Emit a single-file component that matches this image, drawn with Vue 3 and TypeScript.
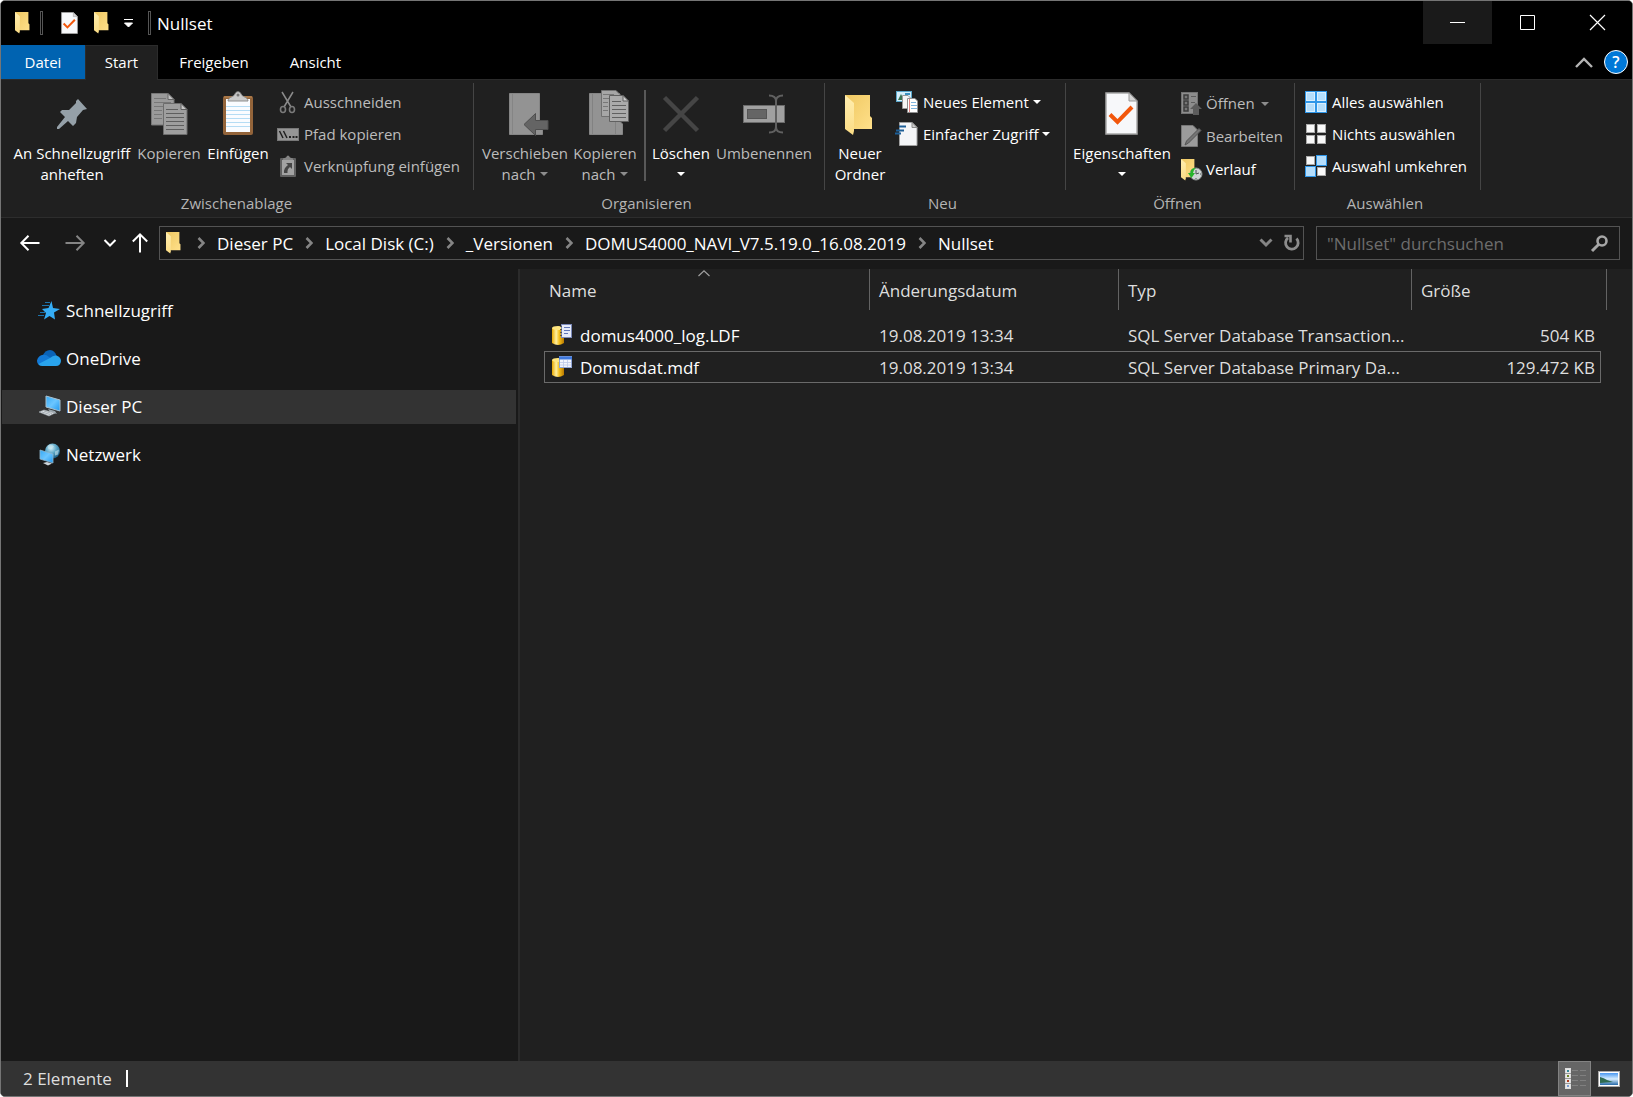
<script setup lang="ts">
import { ref } from 'vue'

interface FileRow {
  name: string
  date: string
  type: string
  size: string
  kind: 'log' | 'data'
}

const crumbs: string[] = ['Dieser PC', 'Local Disk (C:)', '_Versionen', 'DOMUS4000_NAVI_V7.5.19.0_16.08.2019', 'Nullset']

const files: FileRow[] = [
  { name: 'domus4000_log.LDF', date: '19.08.2019 13:34', type: 'SQL Server Database Transaction...', size: '504 KB', kind: 'log' },
  { name: 'Domusdat.mdf', date: '19.08.2019 13:34', type: 'SQL Server Database Primary Da...', size: '129.472 KB', kind: 'data' },
]

const focused = ref('Domusdat.mdf')
const query = ref('')
</script>

<template>
  <div class="window">
    <svg class="defs" aria-hidden="true">
      <defs>
        <linearGradient id="gFolder" x1="0" y1="0" x2="1" y2="1">
          <stop offset="0" stop-color="#efc862" />
          <stop offset="1" stop-color="#ffe08a" />
        </linearGradient>
        <linearGradient id="gFlap" x1="0" y1="0" x2="0" y2="1">
          <stop offset="0" stop-color="#ffeeb0" />
          <stop offset="1" stop-color="#fbdc84" />
        </linearGradient>
        <linearGradient id="gGold" x1="0" y1="0" x2="1" y2="0">
          <stop offset="0" stop-color="#e8a800" />
          <stop offset="0.35" stop-color="#fff0a0" />
          <stop offset="0.6" stop-color="#f4bf1c" />
          <stop offset="1" stop-color="#b87800" />
        </linearGradient>
        <linearGradient id="gScreen" x1="0" y1="0" x2="1" y2="1">
          <stop offset="0" stop-color="#35a8f4" />
          <stop offset="0.5" stop-color="#6cc6ff" />
          <stop offset="1" stop-color="#1e96ee" />
        </linearGradient>
        <linearGradient id="gSky" x1="0" y1="0" x2="0" y2="1">
          <stop offset="0" stop-color="#4a98f0" />
          <stop offset="0.5" stop-color="#d8efff" />
          <stop offset="1" stop-color="#2468a8" />
        </linearGradient>
        <radialGradient id="gGlobe" cx="0.4" cy="0.3" r="0.7">
          <stop offset="0" stop-color="#d6f0f8" />
          <stop offset="0.5" stop-color="#5fa9c8" />
          <stop offset="1" stop-color="#1d5f86" />
        </radialGradient>
        <symbol id="folder" viewBox="0 0 28 41">
          <path d="M0 0H25V21L27 23V34H7Z" fill="url(#gFolder)" />
          <path d="M0 0L9 8V36L8 40L0 34Z" fill="url(#gFlap)" />
        </symbol>
        <symbol id="docCheck" viewBox="0 0 33 43">
          <path d="M1 1H24L32 9V42H1Z" fill="#f7f8fa" stroke="#a8a8a8" stroke-width="1.5" />
          <path d="M24 1V9H32Z" fill="#d4d4d4" stroke="#999" />
          <path d="M5 22.500L12.500 30L27 15" fill="none" stroke="#f2570c" stroke-width="4" />
        </symbol>
        <symbol id="crumbArrow" viewBox="0 0 8 12">
          <path d="M1.500 1L6.500 6L1.500 11" fill="none" stroke="#858585" stroke-width="2.600" />
        </symbol>
      </defs>
    </svg>

    <header class="titlebar">
      <div class="quick">
        <svg class="mini" viewBox="0 0 28 41"><use href="#folder" /></svg>
        <i class="bar bar-a"></i>
        <button class="plain q-doc" aria-label="Eigenschaften"><svg width="17" height="22"><use href="#docCheck" /></svg></button>
        <button class="plain q-folder" aria-label="Neuer Ordner"><svg class="mini" viewBox="0 0 28 41"><use href="#folder" /></svg></button>
        <button class="plain q-more" aria-label="Symbolleiste anpassen">
          <svg width="9" height="8" viewBox="0 0 9 8"><path d="M0 .5H9M.5 4H8.500L4.500 8Z" fill="#fff" stroke="#fff" stroke-width="1" /></svg>
        </button>
        <i class="bar bar-b"></i>
        <h1>Nullset</h1>
      </div>
      <div class="captions">
        <button class="plain cap cap-min" aria-label="Minimieren"><svg width="15" height="15"><path d="M0 7.500H15" stroke="#fff" /></svg></button>
        <button class="plain cap" aria-label="Maximieren"><svg width="15" height="15"><path d="M.5 .5H14.500V14.500H.5Z" fill="none" stroke="#fff" /></svg></button>
        <button class="plain cap" aria-label="Schließen"><svg width="15" height="15"><path d="M0 0L15 15M15 0L0 15" stroke="#fff" stroke-width="1.200" /></svg></button>
      </div>
    </header>

    <nav class="tabs">
      <button class="plain tab tab-file">Datei</button>
      <button class="plain tab tab-on">Start</button>
      <button class="plain tab tab-share">Freigeben</button>
      <button class="plain tab tab-view">Ansicht</button>
      <div class="tabs-end">
        <button class="plain" aria-label="Menüband minimieren"><svg width="18" height="11"><path d="M1 10L9 2L17 10" fill="none" stroke="#b4b4b4" stroke-width="2.400" /></svg></button>
        <button class="plain help" aria-label="Hilfe">?</button>
      </div>
    </nav>

    <section class="ribbon">
      <div class="group g-clip">
        <div class="tools">
          <button class="plain big w-pin">
            <svg viewBox="50 91 44 44"><path d="M78 99L87 109L83 110L77 117L76 123L73 126L68 121L59 129H57V127L65 117L60 112L62 110L69 110L76 103L76 101Z" fill="#95a0a8" /></svg>
            <span>An Schnellzugriff<br />anheften</span>
          </button>
          <button class="plain big w-copy dim">
            <svg viewBox="147 91 44 44">
              <path d="M151.500 93.500H168L174 99.500V125H151.500Z" fill="#9a9a9a" stroke="#777" />
              <path d="M168 93.500V99.500H174Z" fill="#c2c2c2" stroke="#666" />
              <path d="M154 98.500H166M154 102.500H171M154 106.500H171M154 110.500H162M154 114.500H162M154 118.500H162" stroke="#777" />
              <path d="M163.500 103.500H181L187 109.500V134.500H163.500Z" fill="#9e9e9e" stroke="#6d6d6d" />
              <path d="M181 103.500V109.500H187Z" fill="#c6c6c6" stroke="#5e5e5e" />
              <path d="M166 109.500H178M166 113.500H184M166 117.500H184M166 121.500H184M166 125.500H184M166 129.500H184" stroke="#5e5e5e" />
            </svg>
            <span>Kopieren</span>
          </button>
          <button class="plain big w-paste">
            <svg viewBox="216 91 44 44">
              <rect x="223" y="96" width="30" height="39" rx="2" fill="#93643a" />
              <path d="M224 97H252" stroke="#c08b55" />
              <rect x="226" y="99" width="24" height="33" fill="#fafcff" />
              <path d="M226 106.500H250M226 110.500H250M226 114.500H250M226 118.500H250M226 122.500H250M226 126.500H250" stroke="#b5dcf4" />
              <path d="M228 101C228 97 234 97 235 94C236 91 240 91 241 94C242 97 248 97 248 101Z" fill="#c9c9c9" stroke="#8e8e8e" />
              <circle cx="238" cy="95" r="1.500" fill="#777" />
            </svg>
            <span>Einfügen</span>
          </button>
          <div class="stack">
            <button class="plain small dim">
              <svg viewBox="277 91 24 24"><path d="M282 92L291 107M293 92L284 107" stroke="#8b8b8b" stroke-width="1.500" /><g fill="none" stroke="#7a7a7a" stroke-width="1.600"><ellipse cx="283" cy="109.500" rx="2.500" ry="3" /><ellipse cx="292" cy="109.500" rx="2.500" ry="3" /></g></svg>
              Ausschneiden
            </button>
            <button class="plain small dim">
              <svg viewBox="277 123 24 24"><rect x="277.500" y="128.500" width="21" height="12" fill="#959595" stroke="#787878" /><path d="M279.500 131L283 138M283.500 131L287 138" stroke="#222" stroke-width="1.500" /><path d="M289 137H291M292.500 137H294.500M295.500 137H297.500" stroke="#222" stroke-width="2" /></svg>
              Pfad kopieren
            </button>
            <button class="plain small dim">
              <svg viewBox="277 155 24 24"><rect x="280" y="158" width="16" height="19" rx="1" fill="#606060" /><rect x="282" y="160" width="12" height="15" fill="#a2a2a2" /><path d="M283 160V158.500L286 157.500Q288 153.500 290 157.500L293 158.500V160Z" fill="#858585" /><path d="M286 163H292V169L290 167Q287 169 287.500 173H284Q283.500 168 288 165Z" fill="#454545" /></svg>
              Verknüpfung einfügen
            </button>
          </div>
        </div>
        <h2>Zwischenablage</h2>
      </div>

      <div class="group g-org">
        <div class="tools">
          <button class="plain big w-move dim">
            <svg viewBox="502 91 44 44">
              <path d="M508.500 93.500H538.500V121L541.500 124V134.500H508.500Z" fill="#939393" stroke="#858585" />
              <path d="M511.500 94V134" stroke="#858585" />
              <path d="M523 124.500L534.500 113.500V120.500H547V129.500H534.500V135.500Z" fill="#646464" stroke="#4e4e4e" />
            </svg>
            <span>Verschieben<br />nach <i class="caret"></i></span>
          </button>
          <button class="plain big w-copyto dim">
            <svg viewBox="582 91 44 44">
              <path d="M588.500 93.500H618.500V121L621.500 124V134.500H588.500Z" fill="#939393" stroke="#858585" />
              <path d="M591.500 94V134M614.500 122V134" stroke="#828282" />
              <path d="M600.500 90.500H615L619 94.500V116.500H600.500Z" fill="#a6a6a6" stroke="#707070" />
              <path d="M602 94.500H613M602 98.500H614M602 102.500H607M602 106.500H607M602 110.500H607" stroke="#777" />
              <path d="M608.500 95.500H622L627.500 101V121.500H608.500Z" fill="#ababab" stroke="#606060" />
              <path d="M622 95.500V101H627.500Z" fill="#ccc" stroke="#606060" />
              <path d="M611 101.500H620M611 105.500H625M611 109.500H625M611 113.500H625M611 117.500H625" stroke="#606060" />
            </svg>
            <span>Kopieren<br />nach <i class="caret"></i></span>
          </button>
          <i class="split"></i>
          <button class="plain big w-del">
            <svg viewBox="660 91 44 44"><path d="M665.500 97.500L698.500 130.500M698.500 97.500L665.500 130.500" stroke="#454545" stroke-width="4.500" /></svg>
            <span>Löschen<br /><i class="caret"></i></span>
          </button>
          <button class="plain big w-ren dim">
            <svg viewBox="742 91 44 44">
              <rect x="743.500" y="105.500" width="41" height="17" fill="#a0a0a0" stroke="#6b6b6b" />
              <rect x="747.500" y="109.500" width="19" height="9" fill="#656565" stroke="#555" />
              <path d="M769 95.500Q776 95.500 776 101V127Q776 132.500 769 132.500M783 95.500Q776 95.500 776 101V127Q776 132.500 783 132.500" fill="none" stroke="#606060" stroke-width="2" />
            </svg>
            <span>Umbenennen</span>
          </button>
        </div>
        <h2>Organisieren</h2>
      </div>

      <div class="group g-new">
        <div class="tools">
          <button class="plain big w-new">
            <svg viewBox="838 91 44 44"><use href="#folder" x="845" y="95" width="28" height="41" /></svg>
            <span>Neuer<br />Ordner</span>
          </button>
          <div class="stack">
            <button class="plain small">
              <svg viewBox="897 91 24 24">
                <rect x="897.500" y="91.500" width="15" height="10" fill="#d5effb" stroke="#5ba8cc" />
                <path d="M899 100L902 94L905 100Z" fill="#397353" /><path d="M906 94H911" stroke="#3b91c0" stroke-width="2" />
                <path d="M903.500 95.500H909L911.500 98V108.500H903.500Z" fill="#f5f5f5" stroke="#999" />
                <path d="M908.500 98.500H916L918.500 101V112.500H908.500Z" fill="#fff" stroke="#909090" />
                <path d="M910.500 99V112" stroke="#e08484" /><path d="M912 102.500H917M912 105.500H918M912 108.500H918" stroke="#7eb5df" />
              </svg>
              Neues Element <i class="caret"></i>
            </button>
            <button class="plain small">
              <svg viewBox="897 123 24 24">
                <path d="M900.500 122.500H913L918 127.500V145.500H900.500Z" fill="#f4f5f7" stroke="#a0a0a0" />
                <path d="M913 122.500V127.500H918Z" fill="#ccc" stroke="#8b8b8b" />
                <path d="M900 126.500H907M897 130.500H905M896 133.500H902" stroke="#1c5f97" stroke-width="2" />
              </svg>
              Einfacher Zugriff <i class="caret"></i>
            </button>
          </div>
        </div>
        <h2>Neu</h2>
      </div>

      <div class="group g-open">
        <div class="tools">
          <button class="plain big w-prop">
            <svg viewBox="1100 91 44 44"><use href="#docCheck" x="1105" y="92" width="33" height="43" /></svg>
            <span>Eigenschaften<br /><i class="caret"></i></span>
          </button>
          <div class="stack tall">
            <button class="plain small dim">
              <svg viewBox="1179 92 24 24">
                <rect x="1181.500" y="92.500" width="16" height="21" fill="#8d8d8d" stroke="#727272" />
                <g fill="#777" stroke="#3c3c3c" stroke-width="1.500"><rect x="1184" y="95" width="4" height="4" /><rect x="1184" y="101" width="4" height="4" /><rect x="1184" y="107" width="4" height="4" /></g>
                <path d="M1191 96.500H1196M1191 102.500H1195" stroke="#5d5d5d" />
                <path d="M1196 103L1202 109H1199V115H1193V109H1190Z" fill="#5c5c5c" />
              </svg>
              Öffnen <i class="caret far"></i>
            </button>
            <button class="plain small dim">
              <svg viewBox="1179 125 24 24">
                <path d="M1181.500 125.500H1193L1197.500 130V146.500H1181.500Z" fill="#9b9b9b" stroke="#777" />
                <path d="M1185 145L1186.500 141L1199 128.500L1201 130.500L1188.500 143Z" fill="#747474" stroke="#555" />
              </svg>
              Bearbeiten
            </button>
            <button class="plain small">
              <svg viewBox="1179 158 24 24">
                <use href="#folder" x="1181" y="159" width="15" height="22" />
                <circle cx="1196" cy="174" r="6" fill="#cfd4d4" stroke="#8c9292" />
                <path d="M1196 170V174L1199 173M1196 179V178M1192 174H1191M1201 174H1200" fill="none" stroke="#4d5555" />
                <path d="M1196 168Q1190 168 1190.500 173L1188 173L1191.500 178L1195 173H1193Q1193 170 1196 168Z" fill="#27b52b" />
              </svg>
              Verlauf
            </button>
          </div>
        </div>
        <h2>Öffnen</h2>
      </div>

      <div class="group g-sel">
        <div class="tools">
          <div class="stack">
            <button class="plain small">
              <svg viewBox="0 0 24 24"><rect width="22" height="22" fill="#2f96e8" /><g fill="#b5defc" stroke="#d9effe"><rect x="1.500" y="1.500" width="8" height="8" /><rect x="12.500" y="1.500" width="8" height="8" /><rect x="1.500" y="12.500" width="8" height="8" /><rect x="12.500" y="12.500" width="8" height="8" /></g></svg>
              Alles auswählen
            </button>
            <button class="plain small">
              <svg viewBox="0 0 24 24"><g fill="#f8f8f8" stroke="#a9a9a9"><rect x="1.500" y="1.500" width="8" height="8" /><rect x="12.500" y="1.500" width="8" height="8" /><rect x="1.500" y="12.500" width="8" height="8" /><rect x="12.500" y="12.500" width="8" height="8" /></g></svg>
              Nichts auswählen
            </button>
            <button class="plain small">
              <svg viewBox="0 0 24 24"><g fill="#f8f8f8" stroke="#a9a9a9"><rect x="1.500" y="1.500" width="8" height="8" /><rect x="12.500" y="12.500" width="8" height="8" /></g><g fill="#b5defc" stroke="#2f96e8"><rect x="11.500" y=".5" width="10" height="10" /><rect x=".5" y="11.500" width="10" height="10" /></g></svg>
              Auswahl umkehren
            </button>
          </div>
        </div>
        <h2>Auswählen</h2>
      </div>
    </section>

    <div class="navbar">
      <button class="plain n-back" aria-label="Zurück"><svg width="20" height="16"><path d="M1 8H19.500M8.500 .8L1.300 8L8.500 15.200" fill="none" stroke="#fff" stroke-width="2" /></svg></button>
      <button class="plain n-fwd" aria-label="Vorwärts"><svg width="20" height="16"><path d="M.5 8H19M11.500 .8L18.700 8L11.500 15.200" fill="none" stroke="#858585" stroke-width="2" /></svg></button>
      <button class="plain n-rec" aria-label="Zuletzt besucht"><svg width="14" height="8"><path d="M1.500 1L7 6.500L12.500 1" fill="none" stroke="#fff" stroke-width="2" /></svg></button>
      <button class="plain n-up" aria-label="Nach oben"><svg width="16" height="20"><path d="M8 19.500V1M.8 8.500L8 1.300L15.200 8.500" fill="none" stroke="#fff" stroke-width="2" /></svg></button>
      <div class="address">
        <svg class="mini" viewBox="0 0 28 41"><use href="#folder" /></svg>
        <template v-for="c in crumbs" :key="c">
          <svg class="chev" viewBox="0 0 8 12"><use href="#crumbArrow" /></svg>
          <a href="#">{{ c }}</a>
        </template>
        <div class="address-end">
          <button class="plain" aria-label="Vorherige Orte"><svg width="14" height="10"><path d="M1.500 1.500L7 7L12.500 1.500" fill="none" stroke="#858585" stroke-width="3" /></svg></button>
          <button class="plain" aria-label="Aktualisieren"><svg width="18" height="18"><path d="M13.500 4.500A6.300 6.300 0 1 1 5 3.800" fill="none" stroke="#8c8c8c" stroke-width="2.800" /><path d="M1.500 2H7.500V8.500" fill="none" stroke="#8c8c8c" stroke-width="2.600" /></svg></button>
        </div>
      </div>
      <label class="search">
        <input v-model="query" type="text" placeholder="&quot;Nullset&quot; durchsuchen" aria-label="Suchen" />
        <svg width="17" height="17"><circle cx="11" cy="6" r="4.500" fill="none" stroke="#a6a6a6" stroke-width="2.600" /><path d="M7.800 9.200L1 16" stroke="#a6a6a6" stroke-width="3" /></svg>
      </label>
    </div>

    <main class="body">
      <aside class="tree">
        <a href="#">
          <svg viewBox="0 0 24 24"><path d="M14.500 3L16 10L23 11L17 14.500L18 21.500L12.500 18L7 21.500L9 15L5 11L11.500 10Z" fill="#35adf5" /><path d="M8 4.500H13M5 7.500H12M3 14.500H8M1 17.500H7" stroke="#1b73ad" /></svg>
          Schnellzugriff
        </a>
        <a href="#">
          <svg viewBox="0 0 24 24"><path d="M5.500 10Q8 4 13 4Q18 4.500 19.500 10L12 15Z" fill="#0a63b8" /><path d="M5 9Q9 8 12 11L20 16L3 19.500Q0 18 0 14.500Q1 10 5 9Z" fill="#1279d6" /><path d="M13 12Q16 9 19.500 9.500Q24 11 24 15Q23.500 20 19 20H5Q2.500 20 1.500 18Z" fill="#29a3ec" /></svg>
          OneDrive
        </a>
        <a href="#" class="active">
          <svg viewBox="0 0 24 24"><path d="M9 2L23 6V17L9 13Z" fill="url(#gScreen)" stroke="#a9c2d0" /><path d="M11 15L18 17L20 20L13 18Z" fill="#9aa6ad" /><path d="M2 18L7 16L18 19L12 22Z" fill="#dde2e6" stroke="#9ea6ac" stroke-width=".6" /><path d="M5 18L13 20.500M7 17L15 19.500" stroke="#8f979c" stroke-width=".7" /></svg>
          Dieser PC
        </a>
        <a href="#">
          <svg viewBox="0 0 24 24"><circle cx="15.500" cy="9" r="7.500" fill="url(#gGlobe)" /><path d="M11 3.500Q15 1.500 17 4.500L14 7.500L11 6.500ZM18 9.500L22 7.500L21 12.500L18 13.500Z" fill="#c8e6ee" opacity=".6" /><path d="M3 8L16 12V21L3 17Z" fill="url(#gScreen)" stroke="#8fb8cf" stroke-width=".8" /><path d="M6 21L10 20L15 21.500L11 23.500Z" fill="#cdd4d9" /></svg>
          Netzwerk
        </a>
      </aside>

      <section class="content">
        <table>
          <colgroup><col class="c-name" /><col class="c-date" /><col class="c-type" /><col class="c-size" /><col class="c-end" /></colgroup>
          <thead>
            <tr>
              <th class="h-name">Name<svg class="sort" width="12" height="7"><path d="M.5 6L6 .8L11.500 6" fill="none" stroke="#a0a0a0" stroke-width="1.200" /></svg></th>
              <th>Änderungsdatum</th>
              <th>Typ</th>
              <th colspan="2">Größe</th>
            </tr>
          </thead>
          <tbody>
            <tr v-for="f in files" :key="f.name" :class="{ focus: f.name === focused }" @click="focused = f.name">
              <td class="t-name">
                <div>
                  <svg viewBox="0 0 22 22">
                    <path d="M2 4V19Q8 23 14 19V4Z" fill="url(#gGold)" /><ellipse cx="8" cy="4" rx="6" ry="2" fill="#ffe680" />
                    <template v-if="f.kind === 'log'">
                      <rect x="11.500" y=".5" width="10" height="13" fill="#e6ebfa" stroke="#7a88b8" />
                      <path d="M14 3.500H20M14 6.500H20M14 9.500H18" stroke="#6277b8" /><path d="M10 2.500H12M10 5.500H12M10 8.500H12M10 11.500H12" stroke="#555" />
                    </template>
                    <template v-else>
                      <rect x="9.500" y=".5" width="12" height="11" fill="#f3f6fd" stroke="#90a5d5" /><path d="M9 2H22" stroke="#3f78dc" stroke-width="3" />
                      <path d="M10 6.500H21M10 9H21M13.500 4V11M17.500 4V11" stroke="#bdc9e8" stroke-width=".8" />
                    </template>
                  </svg>
                  {{ f.name }}
                </div>
              </td>
              <td>{{ f.date }}</td>
              <td>{{ f.type }}</td>
              <td class="t-size">{{ f.size }}</td>
              <td class="t-end"></td>
            </tr>
          </tbody>
        </table>
      </section>
    </main>

    <footer class="status">
      <span>2 Elemente</span>
      <i></i>
      <div class="views">
        <button class="plain v-list" aria-label="Details">
          <svg width="20" height="21">
            <rect x=".5" y=".5" width="5" height="20" fill="#e9e9e9" stroke="#ddd" />
            <path d="M0 5.500H6M0 10.500H6M0 15.500H6" stroke="#999" />
            <path d="M2 3H4" stroke="#388a9a" stroke-width="2" /><path d="M2 8H4" stroke="#708828" stroke-width="2" /><path d="M2 13H4" stroke="#b03e20" stroke-width="2" /><path d="M2 18H4" stroke="#7a9cd0" stroke-width="2" />
            <path d="M7 2.500H13M15 2.500H21M7 7.500H13M15 7.500H21M7 12.500H13M15 12.500H21M7 17.500H13M15 17.500H21" stroke="#808080" />
          </svg>
        </button>
        <button class="plain v-icons" aria-label="Große Symbole">
          <svg width="22" height="16"><rect x=".5" y=".5" width="21" height="15" fill="#fff" stroke="#aaa" /><rect x="2" y="2" width="18" height="12" fill="url(#gSky)" /><path d="M2 6Q6 7 9 9L15 11L2 12Z" fill="#2f6b52" /></svg>
        </button>
      </div>
    </footer>
  </div>
</template>

<style>
body {
  background: #fff;
}
</style>

<style scoped>
* {
  box-sizing: border-box;
}
.window {
  display: flex;
  flex-direction: column;
  min-height: 100vh;
  overflow: hidden;
  border: 1px solid #757575;
  border-radius: 5px;
  background: #191919;
  color: #fff;
  font-family: "Open Sans", "Noto Sans", sans-serif;
  font-size: 17px;
}
.defs {
  position: absolute;
  width: 0;
  height: 0;
}
svg {
  display: block;
  flex: none;
  overflow: visible;
}
.plain {
  margin: 0;
  padding: 0;
  border: 0;
  background: none;
  color: inherit;
  font: inherit;
  white-space: nowrap;
}
.mini {
  width: 15px;
  height: 22px;
}
h1,
h2 {
  margin: 0;
  font-weight: 400;
}
h1 {
  font-size: 17px;
}

/* title bar */
.titlebar {
  display: flex;
  justify-content: space-between;
  height: 44px;
  background: #000;
}
.quick {
  display: flex;
  align-items: center;
  padding-left: 14px;
}
.bar {
  width: 3px;
  height: 24px;
  border: 1px solid #555;
}
.bar-a {
  margin: 0 18px 0 10px;
}
.q-folder {
  margin-left: 16px;
}
.q-more {
  margin: 0 15px;
}
.bar-b {
  margin-right: 6px;
}
.captions {
  display: flex;
}
.cap {
  display: flex;
  align-items: center;
  justify-content: center;
  width: 70px;
  height: 43px;
}
.cap-min {
  width: 69px;
  background: #1a1a1a;
}

/* tabs */
.tabs {
  display: flex;
  height: 34px;
  background: #000;
  font-size: 15px;
}
.tab {
  height: 34px;
}
.tab-file {
  width: 84px;
  background: #0063b1;
}
.tab-on {
  width: 73px;
  height: 35px;
  padding-bottom: 3px;
  border: 1px solid #2b2b2b;
  border-bottom: 0;
  background: #202020;
  z-index: 1;
}
.tab-share {
  width: 112px;
}
.tab-view {
  width: 91px;
}
.tabs-end {
  display: flex;
  align-items: center;
  gap: 11px;
  margin-left: auto;
  padding-right: 4px;
}
.help {
  width: 24px;
  height: 24px;
  border: 1px solid #fff;
  border-radius: 50%;
  background: #0078d7;
  font-size: 16px;
  font-weight: 600;
  line-height: 22px;
}

/* ribbon */
.ribbon {
  display: flex;
  height: 139px;
  padding-top: 3px;
  border-top: 1px solid #2b2b2b;
  border-bottom: 1px solid #2d2d2d;
  background: #202020;
  font-size: 15px;
  line-height: 21px;
}
.group {
  flex: none;
}
.g-clip {
  width: 473px;
}
.g-org {
  width: 351px;
}
.g-new {
  width: 241px;
}
.g-open {
  width: 229px;
}
.g-sel {
  width: 186px;
}
.tools {
  display: flex;
  height: 107px;
  border-right: 1px solid #454545;
}
.g-clip .tools {
  padding-left: 8px;
}
.g-org .tools {
  padding-left: 9px;
}
.g-new .tools,
.g-open .tools {
  padding-left: 3px;
}
.g-sel .tools {
  padding-left: 10px;
}
.group h2 {
  padding: 3px 6px 0 0;
  color: #b4b4b4;
  font-size: 15px;
  text-align: center;
}
.g-clip h2 {
  padding-right: 2px;
}
.big {
  display: flex;
  flex-direction: column;
  align-items: center;
  padding-top: 8px;
}
.big svg {
  width: 44px;
  height: 44px;
  margin-bottom: 8px;
}
.dim {
  color: #bcbcbc;
}
.w-pin {
  width: 126px;
}
.w-copy {
  width: 68px;
}
.w-paste {
  width: 70px;
}
.w-move {
  width: 84px;
}
.w-copyto {
  width: 76px;
}
.w-del {
  width: 70px;
}
.w-ren {
  width: 96px;
}
.w-new {
  width: 64px;
}
.w-prop {
  width: 106px;
}
.split {
  width: 2px;
  height: 91px;
  margin: 7px 0 0 1px;
  background: #585858;
}
.caret {
  display: inline-block;
  margin-left: 1px;
  border: 4px solid transparent;
  border-top-color: currentColor;
  border-bottom: 0;
  vertical-align: 4px;
}
.w-del .caret,
.w-prop .caret {
  margin-left: 0;
}
.dim .caret {
  opacity: 0.7;
}
.caret.far {
  margin-left: 3px;
}
.stack {
  display: flex;
  flex-direction: column;
  margin: 3px 0 0 4px;
}
.g-sel .stack {
  margin-left: 0;
}
.small {
  display: flex;
  align-items: center;
  gap: 3px;
  height: 32px;
}
.small svg {
  width: 24px;
  height: 24px;
  margin-top: 2px;
}
.stack.tall {
  margin-top: 4px;
}
.tall .small {
  height: 33px;
}
.tall .small svg {
  margin-top: 0;
}

/* navigation bar */
.navbar {
  display: flex;
  align-items: center;
  height: 51px;
  padding: 0 12px 1px 7px;
}
.navbar > button {
  display: flex;
  justify-content: center;
}
.n-back {
  width: 44px;
}
.n-fwd {
  width: 46px;
}
.n-rec {
  width: 24px;
}
.n-up {
  width: 36px;
}
.address {
  display: flex;
  flex: 1;
  align-items: center;
  height: 34px;
  margin-left: 1px;
  padding-left: 6px;
  border: 1px solid #535353;
}
.address a,
.tree a {
  color: #fff;
  text-decoration: none;
  white-space: nowrap;
}
.chev {
  width: 8px;
  height: 12px;
  margin: 0 12px;
}
.address .mini {
  margin-right: 4px;
}
.address-end {
  display: flex;
  align-items: center;
  gap: 10px;
  margin-left: auto;
  padding-right: 2px;
}
.search {
  display: flex;
  flex: none;
  align-items: center;
  width: 304px;
  height: 34px;
  margin-left: 12px;
  padding: 0 11px 0 10px;
  border: 1px solid #535353;
}
.search input {
  flex: 1;
  min-width: 0;
  padding: 0;
  border: 0;
  outline: 0;
  background: none;
  color: #fff;
  font: inherit;
}
.search input::placeholder {
  color: #6d6d6d;
}

/* body */
.body {
  display: flex;
  flex: 1;
}
.tree {
  display: flex;
  flex: none;
  flex-direction: column;
  gap: 14px;
  width: 517px;
  padding: 25px 2px 0 1px;
}
.tree a {
  display: flex;
  align-items: center;
  gap: 5px;
  height: 34px;
  padding: 0 0 2px 35px;
}
.tree svg {
  width: 24px;
  height: 24px;
}
.tree .active {
  background: #333;
}
.content {
  flex: 1;
  padding-left: 24px;
  border-left: 2px solid #2b2b2b;
  background: #202020;
}
table {
  width: 1063px;
  border-spacing: 0;
  table-layout: fixed;
}
.c-name {
  width: 326px;
}
.c-date {
  width: 249px;
}
.c-type {
  width: 293px;
}
.c-size {
  width: 189px;
}
.c-end {
  width: 6px;
}
th {
  height: 41px;
  padding: 2px 0 0 9px;
  border-right: 1px solid #636363;
  color: #dedede;
  font-weight: 400;
  text-align: left;
}
.h-name {
  position: relative;
  padding-left: 5px;
}
.sort {
  position: absolute;
  top: 1px;
  left: calc(50% - 9px);
}
thead::after {
  display: block;
  height: 9px;
  content: "";
}
td {
  height: 32px;
  padding: 0 0 0 9px;
  border: solid transparent;
  border-width: 1px 0;
  color: #dedede;
  white-space: nowrap;
}
.t-name {
  padding-left: 5px;
  border-left-width: 1px;
  color: #fff;
}
.t-name div {
  display: flex;
  align-items: center;
  gap: 8px;
}
.t-name svg {
  width: 22px;
  height: 22px;
}
.t-size {
  padding: 0 5px 0 0;
  border-right-width: 1px;
  text-align: right;
}
.focus td:not(.t-end) {
  border-color: #6a6a6a;
}
.t-end {
  padding: 0;
}

/* status bar */
.status {
  display: flex;
  align-items: center;
  height: 35px;
  padding-left: 22px;
  background: #333;
  color: #dedede;
}
.status > i {
  width: 2px;
  height: 17px;
  margin-left: 14px;
  background: #fff;
}
.views {
  display: flex;
  margin-left: auto;
  padding-right: 6px;
}
.views button {
  display: flex;
  align-items: center;
  justify-content: center;
  height: 35px;
}
.v-list {
  width: 33px;
  border: 1px solid #838383;
  background: #666;
}
.v-icons {
  width: 35px;
}
</style>
